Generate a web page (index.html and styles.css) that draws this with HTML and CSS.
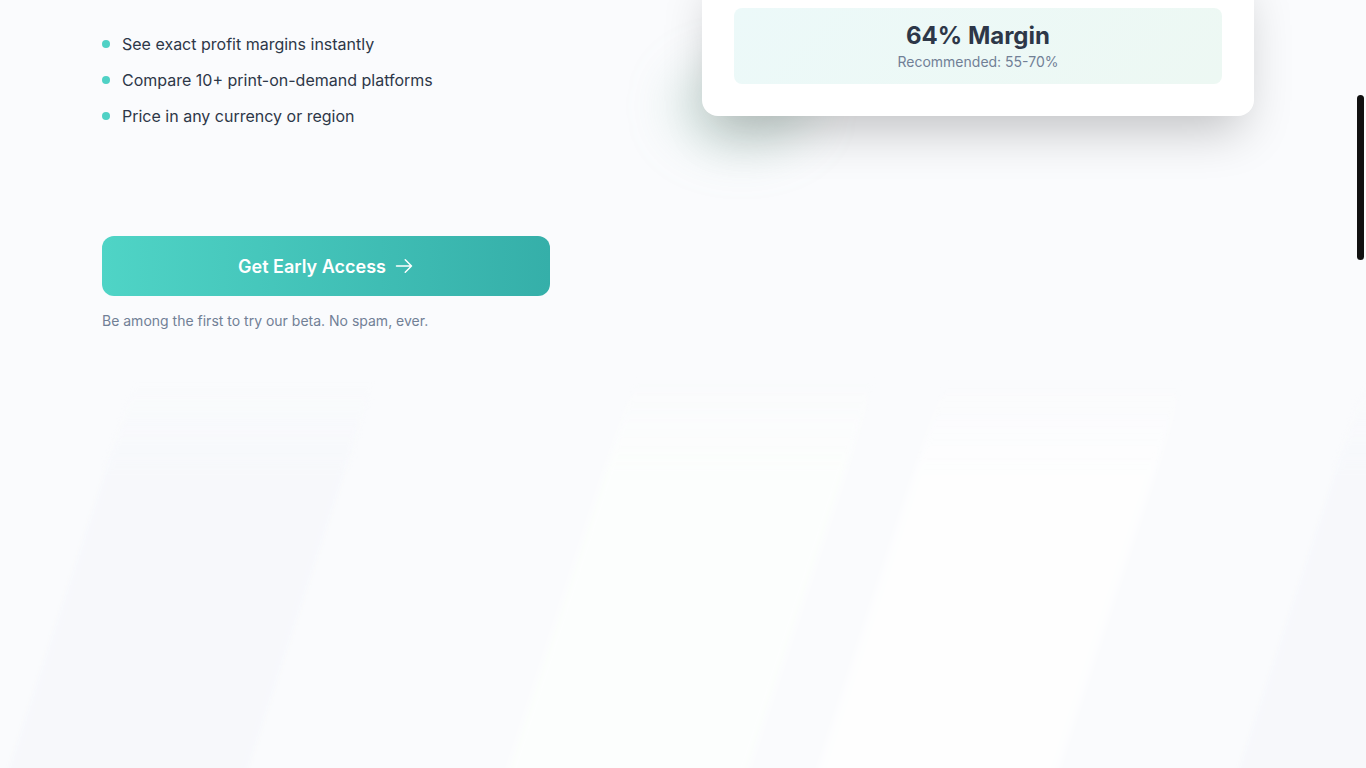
FILE: index.html
```html
<!DOCTYPE html>
<html lang="en">
<head>
<meta charset="utf-8">
<title>Early Access</title>
<link rel="stylesheet" href="styles.css">
</head>
<body>
<div class="bg">
  <div class="stripe s1"></div>
  <div class="stripe s2"></div>
  <div class="stripe s3"></div>
  <div class="stripe s4"></div>
</div>
<main class="hero">
  <section class="left">
    <ul class="features">
      <li><span class="dot"></span>See exact profit margins instantly</li>
      <li><span class="dot"></span>Compare 10+ print-on-demand platforms</li>
      <li><span class="dot"></span>Price in any currency or region</li>
    </ul>
    <button class="cta">Get Early Access
      <svg class="arrow" viewBox="0 0 24 24" fill="none" stroke="currentColor" stroke-width="1.8" stroke-linecap="round" stroke-linejoin="round"><path d="M13.5 4.5 21 12m0 0-7.5 7.5M21 12H3"/></svg>
    </button>
    <p class="note">Be among the first to try our beta. No spam, ever.</p>
  </section>
  <section class="right">
    <div class="card">
      <div class="result">
        <div class="margin">64% Margin</div>
        <div class="rec">Recommended: 55-70%</div>
      </div>
    </div>
  </section>
</main>
<div class="thumb"></div>
</body>
</html>
```
FILE: styles.css
```css
html, body {
  margin: 0;
  padding: 0;
  height: 100%;
  overflow: hidden;
}
body {
  background: #fafbfd;
  font-family: Inter, "Noto Sans", "Liberation Sans", sans-serif;
  color: #2d3748;
  position: relative;
}
.bg {
  position: absolute;
  inset: 0;
  z-index: 0;
  overflow: hidden;
}
.stripe {
  position: absolute;
  top: 380px;
  width: 240px;
  height: 460px;
  transform: skewX(-18deg);
  filter: blur(3px);
  background: linear-gradient(180deg, rgba(245, 247, 251, 0) 0%, rgba(245, 247, 251, 0.6) 20%, rgba(245, 247, 251, 0.6) 100%);
}
.s1 { left: 60px; }
.s2 { left: 560px; background: linear-gradient(180deg, rgba(253, 255, 253, 0) 0%, rgba(253, 255, 253, 0.8) 20%, rgba(253, 255, 253, 0.8) 100%); }
.s3 { left: 870px; background: linear-gradient(180deg, rgba(255, 255, 255, 0) 0%, rgba(255, 255, 255, 0.7) 20%, rgba(255, 255, 255, 0.7) 100%); }
.s4 { left: 1290px; }
.hero {
  position: relative;
  z-index: 1;
  display: grid;
  grid-template-columns: 552px 552px;
  column-gap: 48px;
  padding-left: 102px;
}
.left {
  padding-top: 32px;
}
.features {
  list-style: none;
  margin: 0;
  padding: 0;
  display: flex;
  flex-direction: column;
  gap: 12px;
}
.features li {
  display: flex;
  align-items: center;
  gap: 12px;
  font-size: 16px;
  line-height: 24px;
  color: #2d3748;
}
.dot {
  width: 8px;
  height: 8px;
  border-radius: 50%;
  background: #4fd1c5;
  flex: none;
}
.cta {
  margin-top: 108px;
  width: 448px;
  height: 60px;
  border: none;
  border-radius: 12px;
  background: linear-gradient(90deg, #4fd4c6 0%, #35afa9 100%);
  color: #fff;
  font-family: Inter, "Noto Sans", sans-serif;
  font-size: 18px;
  font-weight: 600;
  display: flex;
  align-items: center;
  justify-content: center;
  gap: 8px;
  padding: 0;
  cursor: pointer;
}
.arrow {
  width: 20px;
  height: 20px;
}
.note {
  margin: 15px 0 0;
  font-size: 14px;
  line-height: 20px;
  color: #718096;
}
.card {
  position: relative;
  margin-top: -40px;
  background: #fff;
  border-radius: 16px;
  padding: 48px 32px 32px;
  box-shadow: 0 25px 50px -12px rgba(0, 0, 0, 0.24);
}
.card::before {
  content: "";
  position: absolute;
  left: -30px;
  bottom: -35px;
  width: 140px;
  height: 90px;
  border-radius: 50%;
  background: rgba(110, 170, 145, 0.22);
  filter: blur(24px);
  z-index: -1;
}
.result {
  border-radius: 8px;
  background: linear-gradient(135deg, #ecf9f9 0%, #edf8f3 100%);
  padding: 12px 16px 12px;
  text-align: center;
}
.margin {
  font-size: 24px;
  line-height: 32px;
  font-weight: 700;
  color: #2d3748;
}
.rec {
  font-size: 14px;
  line-height: 20px;
  color: #718096;
}
.thumb {
  position: fixed;
  right: 2px;
  top: 95px;
  width: 7px;
  height: 165px;
  border-radius: 4px;
  background: #111;
  z-index: 5;
}
```
